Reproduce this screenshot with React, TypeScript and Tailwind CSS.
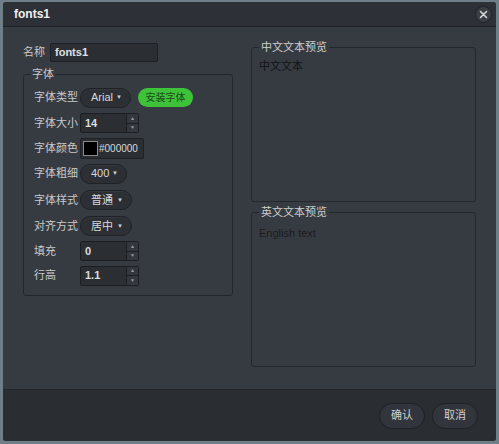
import React from "react";

const font = "font-['Liberation_Sans','Noto_Sans_CJK_SC',sans-serif]";

function Pill({ label, width }: { label: string; width: string }) {
  return (
    <div
      className={`flex h-[20px] ${width} items-center justify-between rounded-full border border-[#1f2226] bg-[#2c3035] pl-[10px] pr-[8px] text-[11px] text-[#d8d8d8] shadow-[inset_0_1px_0_rgba(255,255,255,0.04)]`}
    >
      <span>{label}</span>
      <span className="text-[6px] text-[#cfcfcf]">▼</span>
    </div>
  );
}

function NumberBox({ value }: { value: string }) {
  return (
    <div className="flex h-[20px] w-[59px] items-stretch rounded-[2px] border border-[#1c1f22] bg-[#2b2f34]">
      <span className="flex flex-1 items-center pl-[4px] text-[11px] font-bold text-[#dcdcdc]">{value}</span>
      <div className="flex w-[12px] flex-col border-l border-[#1c1f22] bg-[#34383e]">
        <span className="flex flex-1 items-center justify-center border-b border-[#1c1f22] text-[5px] text-[#9a9a9a]">▲</span>
        <span className="flex flex-1 items-center justify-center text-[5px] text-[#9a9a9a]">▼</span>
      </div>
    </div>
  );
}

function Row({ label, h, children }: { label: string; h: string; children: React.ReactNode }) {
  return (
    <div className={`flex ${h} items-center`}>
      <span className="w-[46px] shrink-0 text-[11px] text-[#c9c9c9]">{label}</span>
      {children}
    </div>
  );
}

export default function App() {
  return (
    <div className={`h-[444px] w-[499px] bg-[#6f7f88] p-[2px] pl-[3px] ${font}`}>
      <div className="flex h-[439px] w-[493px] flex-col overflow-hidden rounded-[3px] bg-[#363b42]">
        {/* title bar */}
        <div className="flex h-[25px] shrink-0 items-center justify-between border-b border-[#1e2125] bg-[#2d3137] pl-[11px] pr-[4px]">
          <span className="text-[12px] font-bold text-[#f0f0f0]">fonts1</span>
          <div className="flex h-[17px] w-[17px] items-center justify-center rounded-full border border-[#1f2226] bg-[#3a3f46]">
            <svg width="9" height="9" viewBox="0 0 9 9">
              <path d="M1.5 1.5 L7.5 7.5 M7.5 1.5 L1.5 7.5" stroke="#d8d8d8" strokeWidth="1.6" strokeLinecap="round" />
            </svg>
          </div>
        </div>

        {/* body */}
        <div className="flex flex-1 gap-[18px] pl-[20px] pr-[20px] pt-[16px]">
          <div className="flex w-[210px] flex-col">
            <div className="flex items-center gap-[5px]">
              <span className="text-[11px] text-[#c9c9c9]">名称</span>
              <div className="flex h-[19px] w-[108px] items-center rounded-[2px] border border-[#1e2125] bg-[#2b2f34] pl-[4px] text-[11px] font-bold text-[#e0e0e0]">
                fonts1
              </div>
            </div>
            <fieldset className="mt-[4px] h-[230px] rounded-[3px] border border-[#24272b] pl-[10px]">
              <legend className="ml-[-3px] px-[1px] text-[11px] text-[#c9c9c9]">字体</legend>
              <div className="flex flex-col pt-[2px]">
                <Row label="字体类型" h="h-[26px]">
                  <Pill label="Arial" width="w-[51px]" />
                  <div className="ml-[7px] flex h-[19px] w-[55px] items-center justify-center rounded-full bg-[#3dc23a] text-[10px] text-[#1d4a1b]">
                    安装字体
                  </div>
                </Row>
                <Row label="字体大小" h="h-[25px]">
                  <NumberBox value="14" />
                </Row>
                <Row label="字体颜色" h="h-[25px]">
                  <div className="flex h-[21px] w-[64px] items-center rounded-[2px] border border-[#1e2125] bg-[#2b2f34] pl-[2px]">
                    <span className="h-[15px] w-[15px] border border-[#8a8a8a] bg-black" />
                    <span className="ml-[1px] text-[10px] text-[#d8d8d8]">#000000</span>
                  </div>
                </Row>
                <Row label="字体粗细" h="h-[26px]">
                  <Pill label="400" width="w-[47px]" />
                </Row>
                <Row label="字体样式" h="h-[27px]">
                  <Pill label="普通" width="w-[52px]" />
                </Row>
                <Row label="对齐方式" h="h-[25px]">
                  <Pill label="居中" width="w-[52px]" />
                </Row>
                <Row label="填充" h="h-[25px]">
                  <NumberBox value="0" />
                </Row>
                <Row label="行高" h="h-[24px]">
                  <NumberBox value="1.1" />
                </Row>
              </div>
            </fieldset>
          </div>

          <div className="flex flex-1 flex-col gap-[4px] mt-[-2px]">
            <fieldset className="h-[161px] rounded-[3px] border border-[#24272b] pl-[7px]">
              <legend className="px-[2px] text-[11px] leading-[13px] text-[#cfcfcf]">中文文本预览</legend>
              <div className="pt-[4px] text-[11px] text-[#111315]">中文文本</div>
            </fieldset>
            <fieldset className="h-[161px] rounded-[3px] border border-[#24272b] pl-[7px]">
              <legend className="px-[2px] text-[11px] leading-[13px] text-[#cfcfcf]">英文文本预览</legend>
              <div className="pt-[6px] text-[11px] text-[#1e1a1a]">English text</div>
            </fieldset>
          </div>
        </div>

        {/* footer */}
        <div className="flex h-[52px] shrink-0 items-center justify-end gap-[7px] border-t border-[#222529] bg-[#2a2d32] pr-[18px]">
          <div className="flex h-[26px] w-[46px] items-center justify-center rounded-full border border-[#1d2024] bg-[#32363c] text-[11px] text-[#d0d0d0]">
            确认
          </div>
          <div className="flex h-[26px] w-[46px] items-center justify-center rounded-full border border-[#1d2024] bg-[#32363c] text-[11px] text-[#d0d0d0]">
            取消
          </div>
        </div>
      </div>
    </div>
  );
}
